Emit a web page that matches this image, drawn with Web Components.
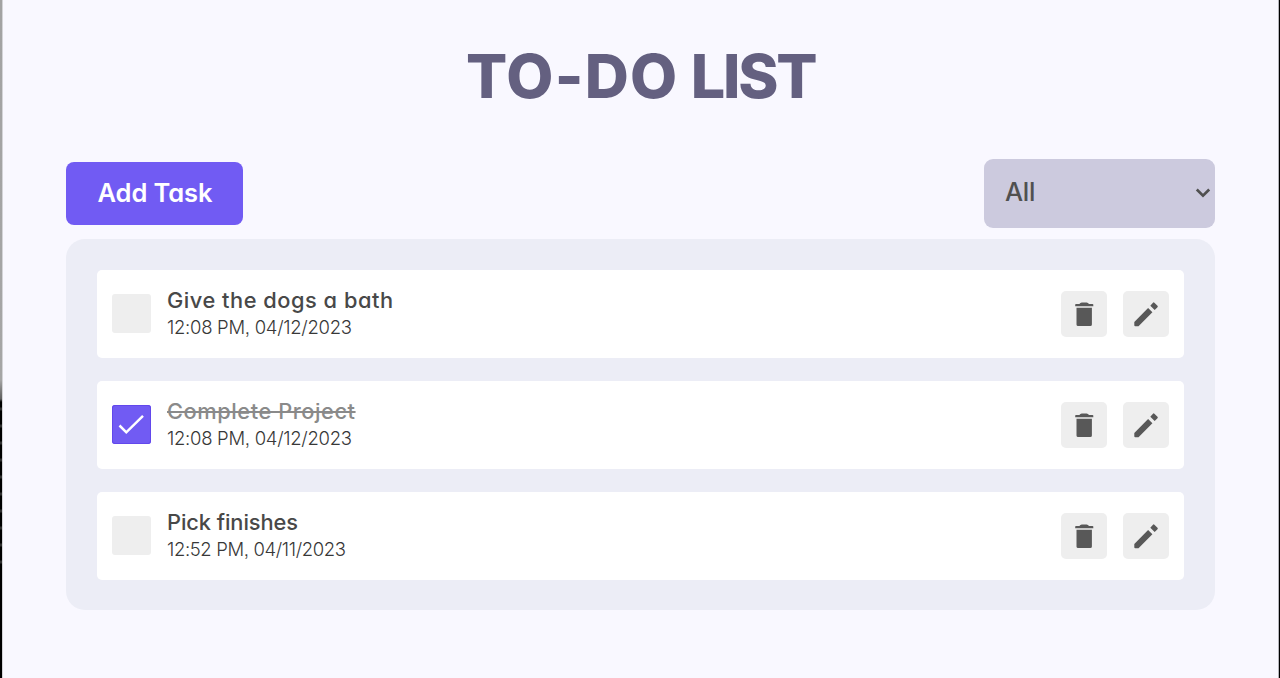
<!DOCTYPE html>
<html lang="en">
<head>
<meta charset="utf-8">
<title>To-Do List</title>
<style>
html,body{margin:0;height:100%}
body{background:#f9f8ff;font-family:Inter,"Noto Sans",sans-serif;overflow:hidden;color:#484848}
.wide{letter-spacing:1.2px}
.tight{letter-spacing:-2.3px}
</style>
</head>
<body>
<todo-app>
  <todo-title><span class="wide">TO-DO </span><span class="tight">LIST</span></todo-title>
  <todo-button slot="tools">Add Task</todo-button>
  <todo-select slot="tools">All</todo-select>
  <todo-item name-width="226" time-width="185"><span slot="name">Give the dogs a bath</span><span slot="time">12:08 PM, 04/12/2023</span></todo-item>
  <todo-item done name-width="188" time-width="185"><span slot="name">Complete Project</span><span slot="time">12:08 PM, 04/12/2023</span></todo-item>
  <todo-item name-width="131" time-width="179"><span slot="name">Pick finishes</span><span slot="time">12:52 PM, 04/11/2023</span></todo-item>
</todo-app>
<script>
function define(name, html, setup) {
  customElements.define(name, class extends HTMLElement {
    connectedCallback() {
      if (this.shadowRoot) return;
      const t = document.createElement('template');
      t.innerHTML = html;
      this.attachShadow({mode: 'open'}).append(t.content.cloneNode(true));
      if (setup) setup(this, this.shadowRoot);
    }
  });
}

/* Window shell: desktop slivers at both sides, page between them */
define('todo-app', `<style>
:host{display:grid;grid-template-columns:3px 1fr 2px;height:678px}
.left{background:linear-gradient(90deg,#0000 2px,#d4d4d8 2px),repeating-linear-gradient(180deg,#0000 0 7px,#7776 8px 10px,#0000 11px 17px) 0 400px/3px 175px no-repeat,linear-gradient(#a3a3a3 0,#a6a6a6 380px,#777 392px,#606060 399px,#000 402px)}
.right{background:linear-gradient(90deg,#b5b5ba 1px,#000 1px)}
main{background:#f9f8ff;padding:0 63px;display:flex;flex-direction:column}
.tools{display:flex;justify-content:space-between;align-items:center;height:70px;margin-top:5px}
.list{margin-top:11px;background:#ecedf6;border-radius:19px;padding:31px 31px 30px;display:flex;flex-direction:column;gap:23px;height:371px;box-sizing:border-box}
header{height:153px;display:flex;justify-content:center}
</style><div class="left"></div><main><header><slot name="title"></slot></header><div class="tools"><slot name="tools"></slot></div><div class="list"><slot></slot></div></main><div class="right"></div>`,
host => { host.querySelector('todo-title').slot = 'title'; });

/* One line of text whose letter spacing adapts to a given width */
define('fit-text', `<style>
:host{display:block;white-space:nowrap;font-feature-settings:"cv11","ss07";font-kerning:normal}
span{display:inline-block;text-decoration:var(--line,none)}
</style><span><slot></slot></span>`, (host, root) => {
  const width = parseFloat(host.getAttribute('width'));
  const count = parseFloat(host.getAttribute('count'));
  const box = root.querySelector('span');
  const natural = box.getBoundingClientRect().width;
  box.style.letterSpacing = (width - natural) / (count - 1) + 'px';
});

define('todo-title', `<style>
:host{display:block;font-size:61px;line-height:76px;font-weight:800;color:#646080;padding-top:38px;word-spacing:-2px;white-space:nowrap}
</style><slot></slot>`);

define('todo-button', `<style>
:host{display:flex;align-items:center;justify-content:center;width:177px;height:63px;box-sizing:border-box;padding:0 0 2px 1px;border-radius:8px;background:#715bf3;color:#fff;font-size:25.5px;font-weight:600}
</style><fit-text width="115" count="8"><slot></slot></fit-text>`);

define('todo-select', `<style>
:host{display:flex;align-items:center;justify-content:space-between;width:231px;height:69px;box-sizing:border-box;padding:0 3px 3px 21px;border-radius:9px;background:#cccade;font-size:25.5px;font-weight:500;color:#505050}
svg{margin-top:2px}
</style><fit-text width="30.5" count="3"><slot></slot></fit-text><svg width="18" height="14" viewBox="0 0 18 14" fill="none" stroke="#505050" stroke-width="2.7"><path d="M2.8 3.5 9 9.7l6.2-6.2"/></svg>`);

define('todo-check', `<style>
:host{display:block;width:39px;height:39px;margin-bottom:2px;border-radius:3px;background:#eee}
:host([checked]){background:#715bf3;box-shadow:inset 0 0 0 1px #6248ec}
svg{display:none}
:host([checked]) svg{display:block}
</style><svg width="39" height="39" viewBox="0 0 39 39" fill="none" stroke="#fff" stroke-width="2.5"><path d="M7.5 20.5 14.3 27.3 31 10.8"/></svg>`);

define('icon-button', `<style>
:host{display:block;width:46px;height:46px;border-radius:5px;background:#eee}
svg{display:block;width:46px;height:46px;fill:#585858}
</style><svg viewBox="0 0 46 46"><path/></svg>`, (host, root) => {
  root.querySelector('path').setAttribute('d', host.getAttribute('kind') === 'delete'
    ? 'M15.5 16.8V33.4Q15.5 35 17.1 35H29.3Q30.9 35 30.9 33.4V16.8ZM14.2 15.3V13.5Q14.2 12.9 15 12.9H18.4Q19.2 11.4 20.8 11.4H25.6Q27.2 11.4 28 12.9H31.5Q32.3 12.9 32.3 13.5V15.3Z'
    : 'M11.3 31V34.2Q11.3 35.2 12.3 35.2H15.5L29.4 21.3 25.1 17ZM34.5 16.2Q35.2 15.5 34.5 14.8L31.4 11.7Q30.7 11 30 11.7L27.3 14.7 31.7 19.1Z');
});

customElements.define('todo-item', class extends HTMLElement {
  connectedCallback() {
    if (this.shadowRoot) return;
    const len = s => this.querySelector('[slot=' + s + ']').textContent.length;
    this.attachShadow({mode: 'open'}).innerHTML = `<style>
:host{display:flex;align-items:center;height:88px;box-sizing:border-box;padding:0 15px;background:#fff;border-radius:5px}
.text{flex:1;margin:0 0 2px 16px}
.name{font-size:21.8px;line-height:28px;font-weight:500;color:#484848}
.time{font-size:18.5px;line-height:26px;font-weight:300;color:#383838}
:host([done]) .name{color:#8a8a8a;--line:line-through 2px}
.actions{display:flex;gap:16px}
</style><todo-check ${this.hasAttribute('done') ? 'checked' : ''}></todo-check>
<div class="text"><fit-text class="name" width="${this.getAttribute('name-width')}" count="${len('name')}"><slot name="name"></slot></fit-text>
<fit-text class="time" width="${this.getAttribute('time-width')}" count="${len('time')}"><slot name="time"></slot></fit-text></div>
<div class="actions"><icon-button kind="delete"></icon-button><icon-button kind="edit"></icon-button></div>`;
  }
});
</script>
</body>
</html>
